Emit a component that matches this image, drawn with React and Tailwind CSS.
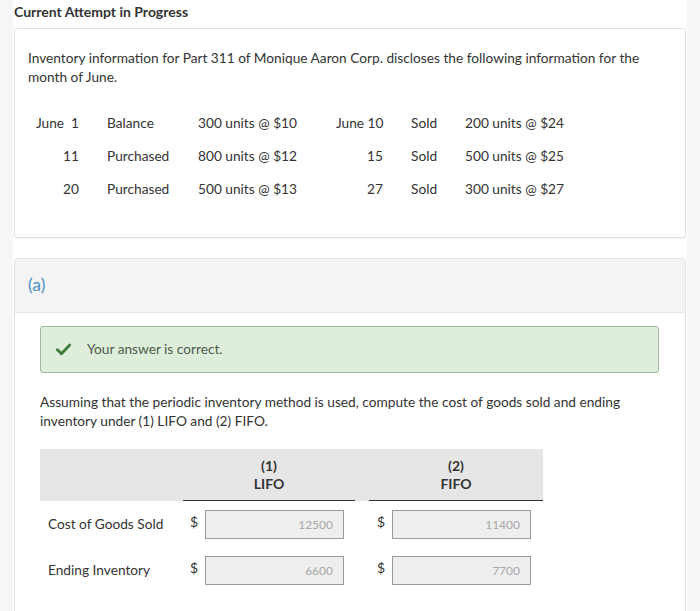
const rows = [
  ["June 1", "Balance", "300 units @ $10", "June 10", "Sold", "200 units @ $24"],
  ["11", "Purchased", "800 units @ $12", "15", "Sold", "500 units @ $25"],
  ["20", "Purchased", "500 units @ $13", "27", "Sold", "300 units @ $27"],
];

const answers = [
  { label: "Cost of Goods Sold", lifo: "12500", fifo: "11400" },
  { label: "Ending Inventory", lifo: "6600", fifo: "7700" },
];

const Check = () => (
  <svg className="h-[13px] w-[15px]" viewBox="0 0 16 13" fill="none">
    <path d="M1.5 6.8l4.3 4.2L14.5 1.8" stroke="#3b7a3b" strokeWidth={3} strokeLinecap="round" strokeLinejoin="round" />
  </svg>
);

const Cell = ({ value, pl }) => (
  <div className={`flex items-start ${pl}`}>
    <span className="mt-[3px] w-[15px] text-[14px] leading-[18px] text-[#333]">$</span>
    <div className="flex h-[29px] w-[139px] items-center justify-end border border-[#9a9a9a] bg-[#eeeeee] pr-[10px] text-[12px] text-[#a8a8a8]">
      {value}
    </div>
  </div>
);

export default function App() {
  return (
    <div className="flex h-[611px] w-[700px] overflow-hidden bg-[#f6f6f6] font-['Lato',sans-serif] text-[13.7px] text-[#333]">
      <div className="ml-[13px] flex w-[674px] flex-col bg-white">
        <div className="px-px pt-[3px] text-[14px] font-bold leading-[18px] text-[#333]">
          Current Attempt in Progress
        </div>

        <div className="mx-px mt-[7px] h-[210px] rounded-[3px] border border-[#e2e2e2] bg-white px-[13px] pt-[19px] shadow-[0_1px_1px_rgba(0,0,0,0.04)]">
          <p className="leading-[19px]">
            Inventory information for Part 311 of Monique Aaron Corp. discloses the following information for the month of June.
          </p>
          <div className="mt-[21px] flex flex-col whitespace-nowrap">
            {rows.map((r, i) => (
              <div key={i} className="flex h-[33px] items-center">
                <span className="w-[51px] whitespace-pre text-right">{r[0] === "June 1" ? "June  1" : r[0]}</span>
                <span className="ml-[28px] w-[91px]">{r[1]}</span>
                <span className="w-[138px]">{r[2]}</span>
                <span className="w-[47px] text-right">{r[3]}</span>
                <span className="ml-[28px] w-[54px]">{r[4]}</span>
                <span>{r[5]}</span>
              </div>
            ))}
          </div>
        </div>

        <div className="mx-px mt-[20px] flex-1 rounded-t-[3px] border border-b-0 border-[#e2e2e2] bg-white">
          <div className="flex h-[54px] items-center border-b border-[#e6e6e6] bg-[#f4f4f4] px-[13px] text-[17.5px] text-[#4b8fc4]">
            (a)
          </div>
          <div className="px-[25px] pt-[13px]">
            <div className="flex h-[47px] w-[619px] items-center rounded-[3px] border-[1.5px] border-[#9fb89f] bg-[#dfeedb] pl-[15px]">
              <Check />
              <span className="ml-[16px] text-[#4d5a4d]">Your answer is correct.</span>
            </div>
            <p className="mt-[19px] leading-[19px]">
              Assuming that the periodic inventory method is used, compute the cost of goods sold and ending inventory under (1) LIFO and (2) FIFO.
            </p>

            <div className="mt-[19px] w-[503px]">
              <div className="grid h-[52px] grid-cols-[143px_172px_14px_174px] bg-[#e6e6e6] text-[14px] font-bold leading-[18px]">
                <div />
                <div className="flex flex-col items-center justify-center border-b-[1.5px] border-[#333]">
                  <span>(1)</span>
                  <span>LIFO</span>
                </div>
                <div />
                <div className="flex flex-col items-center justify-center border-b-[1.5px] border-[#333]">
                  <span>(2)</span>
                  <span>FIFO</span>
                </div>
              </div>
              {answers.map((a, i) => (
                <div key={i} className={`grid grid-cols-[143px_186px_174px] ${i === 0 ? "mt-[9px]" : "mt-[17px]"}`}>
                  <div className="flex h-[29px] items-center pl-[8px]">{a.label}</div>
                  <Cell value={a.lifo} pl="pl-[7px]" />
                  <Cell value={a.fifo} pl="pl-[8px]" />
                </div>
              ))}
            </div>
          </div>
        </div>
      </div>
    </div>
  );
}
